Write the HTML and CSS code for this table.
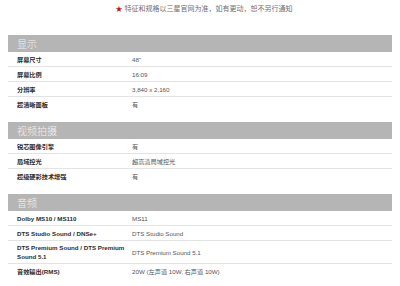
FILE: index.html
```
<!DOCTYPE html>
<html lang="zh-CN">
<head>
<meta charset="utf-8">
<link rel="stylesheet" href="styles.css">
</head>
<body>
<div class="page">
  <p class="notice"><span class="star">★</span> 特征和规格以三星官网为准，如有更动，恕不另行通知</p>

  <section class="spec">
    <h2 class="spec-title">显示</h2>
    <div class="row"><div class="label">屏幕尺寸</div><div class="value">48"</div></div>
    <div class="row"><div class="label">屏幕比例</div><div class="value">16:09</div></div>
    <div class="row"><div class="label">分辨率</div><div class="value">3,840 x 2,160</div></div>
    <div class="row last"><div class="label">超清晰面板</div><div class="value">有</div></div>
  </section>

  <section class="spec">
    <h2 class="spec-title">视频拍摄</h2>
    <div class="row"><div class="label">锐芯图像引擎</div><div class="value">有</div></div>
    <div class="row"><div class="label">局域控光</div><div class="value">超高清局域控光</div></div>
    <div class="row last"><div class="label">超级硬彩技术增强</div><div class="value">有</div></div>
  </section>

  <section class="spec">
    <h2 class="spec-title">音频</h2>
    <div class="row"><div class="label">Dolby MS10 / MS110</div><div class="value">MS11</div></div>
    <div class="row"><div class="label">DTS Studio Sound / DNSe+</div><div class="value">DTS Studio Sound</div></div>
    <div class="row"><div class="label">DTS Premium Sound / DTS Premium Sound 5.1</div><div class="value">DTS Premium Sound 5.1</div></div>
    <div class="row last"><div class="label">音效输出(RMS)</div><div class="value">20W (左声道 10W, 右声道 10W)</div></div>
  </section>
</div>
</body>
</html>
```
FILE: styles.css
```
html, body {
  margin: 0;
  padding: 0;
  background: #ffffff;
}

.page {
  padding: 0 8px;
  font-family: "Liberation Sans", Arial, "Noto Sans CJK SC", sans-serif;
}

.notice {
  margin: 0 0 21px;
  padding-top: 4px;
  font-size: 7px;
  line-height: 10px;
  color: #6f6f6f;
  text-align: center;
  padding-left: 8px;
}

.star {
  color: #d0121b;
  font-size: 7px;
}

.spec {
  margin-bottom: 10px;
}

.spec-title {
  margin: 0;
  height: 17px;
  background: #b5b5b5;
  color: #f4f4f4;
  font-family: "Noto Sans CJK SC", sans-serif;
  font-weight: 300;
  font-size: 10px;
  line-height: 17px;
  padding-left: 9px;
}

.row {
  display: grid;
  grid-template-columns: 124px 1fr;
  align-items: center;
  border-bottom: 1px solid #e3e3e3;
  font-size: 6.2px;
  line-height: 9px;
  padding: 2px 0;
  box-sizing: border-box;
  min-height: 15px;
}

.row.last {
  border-bottom: none;
}

.label {
  padding-left: 9px;
  padding-right: 2px;
  font-weight: 700;
  color: #2b2b2b;
}

.value {
  color: #555555;
}
```
